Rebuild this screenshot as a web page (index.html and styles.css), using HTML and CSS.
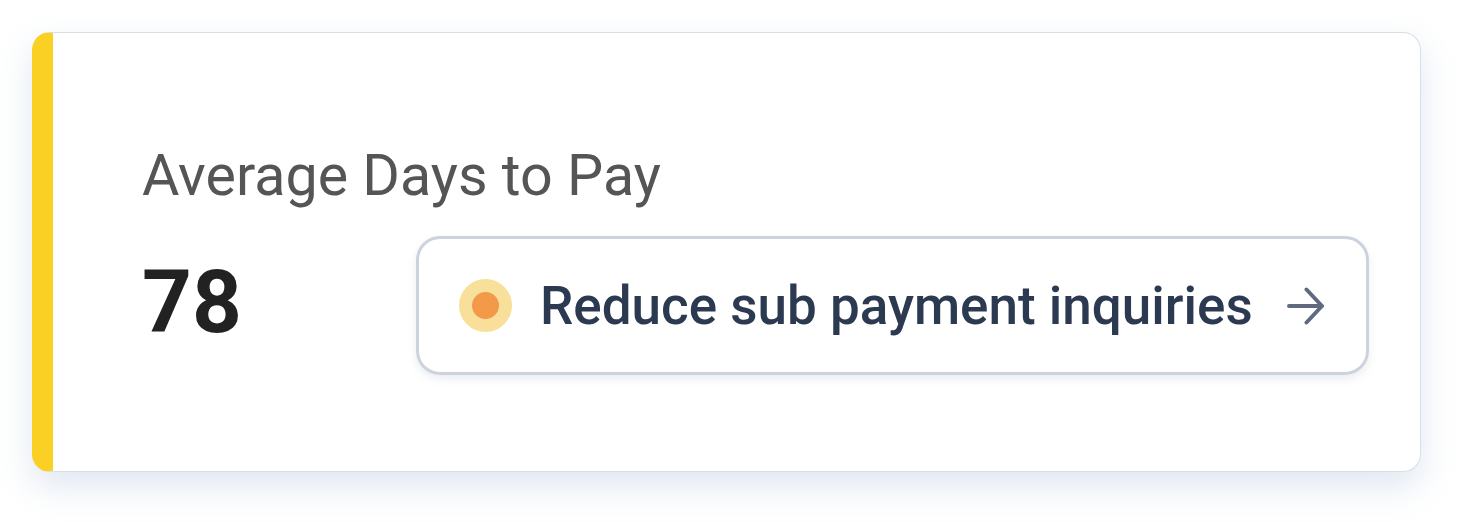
FILE: index.html
```html
<!DOCTYPE html>
<html lang="en">
<head>
    <meta charset="UTF-8">
    <meta name="viewport" content="width=device-width, initial-scale=1.0">
    <title>Average Days to Pay</title>
    <link rel="stylesheet" href="styles.css">
</head>
<body>
    <div class="card">
        <h2 class="card-title">Average Days to Pay</h2>
        <div class="card-row">
            <div class="metric">78</div>
            <a class="action" href="#">
                <span class="dot"></span>
                <span class="action-label">Reduce sub payment inquiries</span>
                <svg class="arrow" width="38" height="38" viewBox="0 0 38 38" fill="none">
                    <path d="M2 19H35M19.5 2.5L35 19L19.5 35.5" stroke="#5f6a80" stroke-width="4" stroke-linecap="round" stroke-linejoin="round"/>
                </svg>
            </a>
        </div>
    </div>
</body>
</html>
```

FILE: styles.css
```css
body {
    margin: 0;
    padding: 32px 49px 50px 32px;
    background-color: #fff;
    font-family: Roboto, "Liberation Sans", sans-serif;
}
.card {
    height: 440px;
    box-sizing: border-box;
    background-color: #fff;
    border: 1px solid #d9dfe7;
    border-left: 21px solid #fbd024;
    border-radius: 18px;
    box-shadow: 0 14px 34px rgba(150, 175, 210, 0.3);
    padding: 109px 0 0 89px;
}
.card-title {
    margin: 0;
    font-size: 57.4px;
    font-weight: 400;
    line-height: 67px;
    color: #555;
}
.card-row {
    display: flex;
    align-items: center;
    margin-top: 27px;
}
.metric {
    width: 274px;
    font-size: 87px;
    font-weight: 700;
    color: #222;
    line-height: 1;
    margin-top: -6px;
}
.action {
    display: flex;
    align-items: center;
    width: 953px;
    height: 139px;
    box-sizing: border-box;
    padding: 0 0 0 40px;
    border: 3px solid #cdd3dd;
    border-radius: 24px;
    box-shadow: 0 4px 8px rgba(120, 135, 160, 0.15);
    text-decoration: none;
}
.dot {
    width: 27px;
    height: 27px;
    border-radius: 50%;
    background-color: #f2994a;
    border: 13px solid #f8e09a;
    flex-shrink: 0;
}
.action-label {
    margin-left: 28px;
    font-size: 53px;
    font-weight: 500;
    color: #2c3a51;
}
.arrow {
    margin-left: 34px;
}
```
